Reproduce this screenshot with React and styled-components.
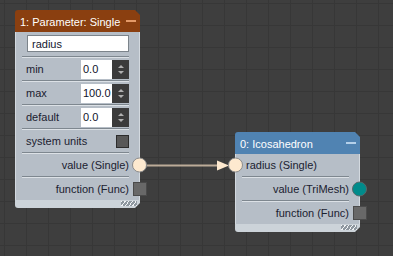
import React from "react";
import styled, { createGlobalStyle } from "styled-components";

const GlobalStyle = createGlobalStyle`
    html, body {
        margin: 0;
        padding: 0;
        background: #3e3e3e;
    }
`;

const Canvas = styled.div`
    position: relative;
    width: 393px;
    height: 256px;
    overflow: hidden;
    background-color: #3e3e3e;
    background-image:
        linear-gradient(#373737 1px, transparent 1px),
        linear-gradient(90deg, #373737 1px, transparent 1px);
    background-size: 22px 22px;
    background-position: 4px 3px;
    font-family: "Liberation Sans", Arial, sans-serif;
    font-size: 11px;
`;

const Wire = styled.svg`
    position: absolute;
    left: 0;
    top: 0;
`;

const Node = styled.div`
    position: absolute;
    left: ${(p) => p.$x}px;
    top: ${(p) => p.$y}px;
    width: 125px;
    color: #1b2130;
`;

const Header = styled.div`
    height: 22px;
    display: flex;
    align-items: center;
    justify-content: space-between;
    padding: 1px 4px 0 5px;
    box-sizing: border-box;
    background: ${(p) => p.$color};
    color: #fff;
    font-size: 11px;
    border-radius: 3px 0 0 0;
    clip-path: polygon(0 0, calc(100% - 5px) 0, 100% 5px, 100% 100%, 0 100%);
`;

const Minimize = styled.span`
    width: 10px;
    height: 2px;
    margin-top: -2px;
    background: ${(p) => p.$color};
`;

const Body = styled.div`
    background: #b6bec7;
    border-left: 1px solid #d3d9df;
    border-right: 1px solid #d3d9df;
`;

const Footer = styled.div`
    position: relative;
    height: 8px;
    background: #ccd3d9;
    border-radius: 0 0 0 3px;
    clip-path: polygon(0 0, 100% 0, 100% calc(100% - 5px), calc(100% - 5px) 100%, 0 100%);

    &::after {
        content: "";
        position: absolute;
        right: 3px;
        top: 1px;
        width: 16px;
        height: 5px;
        background: repeating-linear-gradient(
            -55deg,
            #f2f4f6 0 1px,
            #8e979f 1px 3px
        );
    }
`;

const NameBlock = styled.div`
    height: 24px;
    padding: 3px 10px 0 11px;
    box-sizing: border-box;
`;

const TextField = styled.div`
    height: 17px;
    box-sizing: border-box;
    padding: 0 4px;
    display: flex;
    align-items: center;
    background: #fff;
    border: 1px solid #7c848b;
    color: #141830;
`;

const Separator = styled.div`
    height: 0;
    margin: 0 10px 0 6px;
    border-top: 1px solid #7e878f;
    border-bottom: 1px solid #dce1e6;
`;

const Row = styled.div`
    position: relative;
    height: 22px;
    display: flex;
    align-items: center;
    justify-content: ${(p) => (p.$end ? "flex-end" : "space-between")};
    padding: 0 10px 0 10px;
`;

const Spin = styled.div`
    display: flex;
    height: 19px;
`;

const SpinValue = styled.div`
    width: 31px;
    box-sizing: border-box;
    padding-left: 2px;
    display: flex;
    align-items: center;
    background: #fff;
    color: #10122a;
    white-space: nowrap;
    overflow: hidden;
`;

const SpinButtons = styled.div`
    width: 17px;
    background: #3b3b3b;
    display: flex;
    flex-direction: column;
    align-items: center;
    justify-content: center;
    gap: 3px;
`;

const Arrow = styled.span`
    width: 0;
    height: 0;
    border-left: 3px solid transparent;
    border-right: 3px solid transparent;
    ${(p) => (p.$down ? "border-top: 3px solid #b0b0b0;" : "border-bottom: 3px solid #b0b0b0;")}
`;

const Check = styled.div`
    width: 13px;
    height: 13px;
    box-sizing: border-box;
    background: #585858;
    border: 1px solid #2c2c2c;
`;

const Port = styled.span`
    position: absolute;
    top: 50%;
    ${(p) => (p.$left ? "left: -8px;" : "right: -8px;")}
    width: ${(p) => (p.$square ? 14 : 15)}px;
    height: ${(p) => (p.$square ? 14 : 15)}px;
    box-sizing: border-box;
    transform: translateY(-50%);
    border-radius: ${(p) => (p.$square ? "0" : "50%")};
    background: ${(p) => p.$fill};
    border: 1px solid ${(p) => p.$edge};
`;

const SpinField = ({ label, value }) => (
    <Row>
        <span>{label}</span>
        <Spin>
            <SpinValue>{value}</SpinValue>
            <SpinButtons>
                <Arrow />
                <Arrow $down />
            </SpinButtons>
        </Spin>
    </Row>
);

const FuncPort = () => <Port $square $fill="#686868" $edge="#4a4a4a" />;

export default function App() {
    return (
        <>
            <GlobalStyle />
            <Canvas>
                <Wire width="393" height="256">
                    <line x1="147" y1="165.5" x2="220" y2="165.5" stroke="#bcab98" strokeWidth="2" />
                    <polygon points="217,160.5 229,165.5 217,170.5" fill="#fde9cf" />
                </Wire>

                <Node $x={15} $y={10}>
                    <Header $color="#8a3f10">
                        <span>1: Parameter: Single</span>
                        <Minimize $color="#e49a68" />
                    </Header>
                    <Body>
                        <NameBlock>
                            <TextField>radius</TextField>
                        </NameBlock>
                        <Separator />
                        <SpinField label="min" value="0.0" />
                        <Separator />
                        <SpinField label="max" value="100.0" />
                        <Separator />
                        <SpinField label="default" value="0.0" />
                        <Separator />
                        <Row>
                            <span>system units</span>
                            <Check />
                        </Row>
                        <Separator />
                        <Row $end>
                            <span>value (Single)</span>
                            <Port $fill="#fde9cf" $edge="#8c8c8c" />
                        </Row>
                        <Separator />
                        <Row $end>
                            <span>function (Func)</span>
                            <FuncPort />
                        </Row>
                    </Body>
                    <Footer />
                </Node>

                <Node $x={235} $y={132}>
                    <Header $color="#5083b2">
                        <span>0: Icosahedron</span>
                        <Minimize $color="#b4d0ea" />
                    </Header>
                    <Body>
                        <Row>
                            <span>radius (Single)</span>
                            <Port $left $fill="#fde9cf" $edge="#8c8c8c" />
                        </Row>
                        <Separator />
                        <Row $end>
                            <span>value (TriMesh)</span>
                            <Port $fill="#008b8b" $edge="#56686a" />
                        </Row>
                        <Separator />
                        <Row $end>
                            <span>function (Func)</span>
                            <FuncPort />
                        </Row>
                    </Body>
                    <Footer />
                </Node>
            </Canvas>
        </>
    );
}
